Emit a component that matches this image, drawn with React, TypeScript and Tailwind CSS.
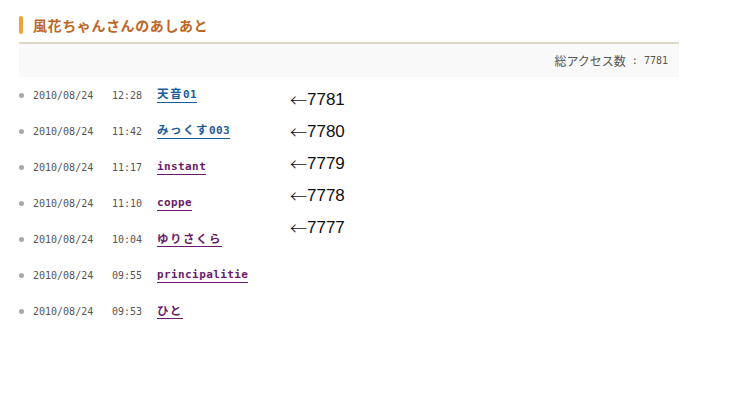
import React from "react";

type Row = { date: string; time: string; name: string; visited: boolean };

const rows: Row[] = [
  { date: "2010/08/24", time: "12:28", name: "天音01", visited: false },
  { date: "2010/08/24", time: "11:42", name: "みっくす003", visited: false },
  { date: "2010/08/24", time: "11:17", name: "instant", visited: true },
  { date: "2010/08/24", time: "11:10", name: "coppe", visited: true },
  { date: "2010/08/24", time: "10:04", name: "ゆりさくら", visited: true },
  { date: "2010/08/24", time: "09:55", name: "principalitie", visited: true },
  { date: "2010/08/24", time: "09:53", name: "ひと", visited: true },
];

const arrows = ["7781", "7780", "7779", "7778", "7777"];

function splitRuns(s: string): { ascii: boolean; text: string }[] {
  const out: { ascii: boolean; text: string }[] = [];
  for (const ch of s) {
    const ascii = ch.charCodeAt(0) < 128;
    const last = out[out.length - 1];
    if (last && last.ascii === ascii) last.text += ch;
    else out.push({ ascii, text: ch });
  }
  return out;
}

function Name({ name, visited }: { name: string; visited: boolean }) {
  const color = visited
    ? "text-[#6a1b6a] border-[#6a1b6a]"
    : "text-[#1c5d99] border-[#1c5d99]";
  return (
    <a
      href="#"
      className={`inline-flex items-baseline border-b-[1.5px] pb-[1px] font-bold leading-[13px] ${color}`}
    >
      {splitRuns(name).map((r, i) =>
        r.ascii ? (
          <span
            key={i}
            className="text-[11px] tracking-[0.4px] [font-family:'DejaVu_Sans_Mono',monospace]"
          >
            {r.text}
          </span>
        ) : (
          <span
            key={i}
            className="text-[11.5px] tracking-[1.5px] [font-family:'Noto_Sans_CJK_JP',sans-serif]"
          >
            {r.text}
          </span>
        )
      )}
    </a>
  );
}

export default function App() {
  return (
    <div className="min-h-[412px] w-[755px] bg-white pl-[19px] pt-[14px] [font-family:'Noto_Sans_CJK_JP',sans-serif]">
      <div className="w-[660px]">
        <div className="flex h-[30px] items-start border-b-2 border-[#ddd5c8]">
          <div className="flex h-[22px] items-center">
            <span className="mr-[10px] h-[18px] w-[4px] rounded-[2px] bg-[#f0a232]" />
            <h1 className="text-[14px] font-bold leading-[22px] tracking-[0.6px] text-[#bd6626]">
              風花ちゃんさんのあしあと
            </h1>
          </div>
        </div>
        <div className="flex h-[33px] items-center justify-end bg-[#f9f9f9] pr-[11px] text-[12px] text-[#555]">
          <span>総アクセス数</span>
          <span className="whitespace-pre text-[10px] [font-family:'DejaVu_Sans_Mono',monospace]">
            {" : 7781"}
          </span>
        </div>
      </div>
      <div className="flex">
        <ul className="w-[271px]">
          {rows.map((r, i) => (
            <li key={i} className="flex h-[36px] items-center">
              <span className="w-[14px]">
                <span className="block h-[5px] w-[5px] rounded-full bg-[#a8a8a8]" />
              </span>
              <span className="w-[79px] text-[10px] text-[#555] [font-family:'DejaVu_Sans_Mono',monospace]">
                {r.date}
              </span>
              <span className="w-[45px] text-[10px] text-[#555] [font-family:'DejaVu_Sans_Mono',monospace]">
                {r.time}
              </span>
              <Name name={r.name} visited={r.visited} />
            </li>
          ))}
        </ul>
        <div className="pt-[6px] text-[17px] text-[#111] [font-family:'Liberation_Sans',sans-serif]">
          {arrows.map((a) => (
            <div key={a} className="flex h-[32px] items-center leading-none">
              <span className="font-light leading-none [font-family:'Noto_Sans_CJK_JP',sans-serif]">←</span>
              <span className="leading-none">{a}</span>
            </div>
          ))}
        </div>
      </div>
    </div>
  );
}
